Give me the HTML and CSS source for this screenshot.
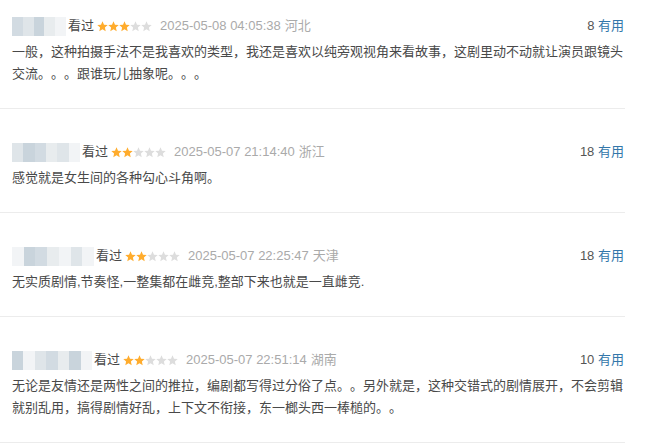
FILE: index.html
```html
<!DOCTYPE html>
<html lang="zh-CN">
<head>
<meta charset="utf-8">
<link rel="stylesheet" href="styles.css">
</head>
<body>
<div class="list">
  <div class="item first">
    <div class="head">
      <div class="left">
        <span class="blur w54"><i class="c1"></i><i class="c2"></i><i class="c3"></i><i class="c4"></i><i class="c5"></i></span>
        <span class="watched">看过</span>
        <svg class="stars" width="55" height="11" viewBox="0 0 55 11">
          <polygon class="on" points="5.5,0.3 7,3.8 10.7,4.1 7.9,6.6 8.7,10.3 5.5,8.3 2.3,10.3 3.1,6.6 0.3,4.1 4,3.8"/>
          <polygon class="on" transform="translate(11,0)" points="5.5,0.3 7,3.8 10.7,4.1 7.9,6.6 8.7,10.3 5.5,8.3 2.3,10.3 3.1,6.6 0.3,4.1 4,3.8"/>
          <polygon class="on" transform="translate(22,0)" points="5.5,0.3 7,3.8 10.7,4.1 7.9,6.6 8.7,10.3 5.5,8.3 2.3,10.3 3.1,6.6 0.3,4.1 4,3.8"/>
          <polygon class="off" transform="translate(33,0)" points="5.5,0.3 7,3.8 10.7,4.1 7.9,6.6 8.7,10.3 5.5,8.3 2.3,10.3 3.1,6.6 0.3,4.1 4,3.8"/>
          <polygon class="off" transform="translate(44,0)" points="5.5,0.3 7,3.8 10.7,4.1 7.9,6.6 8.7,10.3 5.5,8.3 2.3,10.3 3.1,6.6 0.3,4.1 4,3.8"/>
        </svg>
        <span class="time">2025-05-08 04:05:38</span>
        <span class="loc">河北</span>
      </div>
      <div class="vote"><span class="num">8</span> <span class="useful">有用</span></div>
    </div>
    <p class="text">一般，这种拍摄手法不是我喜欢的类型，我还是喜欢以纯旁观视角来看故事，这剧里动不动就让演员跟镜头交流。。。跟谁玩儿抽象呢。。。</p>
  </div>

  <div class="item">
    <div class="head">
      <div class="left">
        <span class="blur w66"><i class="c2"></i><i class="c3"></i><i class="c1"></i><i class="c4"></i><i class="c2"></i><i class="c5"></i></span>
        <span class="watched">看过</span>
        <svg class="stars" width="55" height="11" viewBox="0 0 55 11">
          <polygon class="on" points="5.5,0.3 7,3.8 10.7,4.1 7.9,6.6 8.7,10.3 5.5,8.3 2.3,10.3 3.1,6.6 0.3,4.1 4,3.8"/>
          <polygon class="on" transform="translate(11,0)" points="5.5,0.3 7,3.8 10.7,4.1 7.9,6.6 8.7,10.3 5.5,8.3 2.3,10.3 3.1,6.6 0.3,4.1 4,3.8"/>
          <polygon class="off" transform="translate(22,0)" points="5.5,0.3 7,3.8 10.7,4.1 7.9,6.6 8.7,10.3 5.5,8.3 2.3,10.3 3.1,6.6 0.3,4.1 4,3.8"/>
          <polygon class="off" transform="translate(33,0)" points="5.5,0.3 7,3.8 10.7,4.1 7.9,6.6 8.7,10.3 5.5,8.3 2.3,10.3 3.1,6.6 0.3,4.1 4,3.8"/>
          <polygon class="off" transform="translate(44,0)" points="5.5,0.3 7,3.8 10.7,4.1 7.9,6.6 8.7,10.3 5.5,8.3 2.3,10.3 3.1,6.6 0.3,4.1 4,3.8"/>
        </svg>
        <span class="time">2025-05-07 21:14:40</span>
        <span class="loc">浙江</span>
      </div>
      <div class="vote"><span class="num">18</span> <span class="useful">有用</span></div>
    </div>
    <p class="text">感觉就是女生间的各种勾心斗角啊。</p>
  </div>

  <div class="item">
    <div class="head">
      <div class="left">
        <span class="blur w82"><i class="c5"></i><i class="c3"></i><i class="c1"></i><i class="c4"></i><i class="c5"></i><i class="c2"></i><i class="c5"></i></span>
        <span class="watched">看过</span>
        <svg class="stars" width="55" height="11" viewBox="0 0 55 11">
          <polygon class="on" points="5.5,0.3 7,3.8 10.7,4.1 7.9,6.6 8.7,10.3 5.5,8.3 2.3,10.3 3.1,6.6 0.3,4.1 4,3.8"/>
          <polygon class="on" transform="translate(11,0)" points="5.5,0.3 7,3.8 10.7,4.1 7.9,6.6 8.7,10.3 5.5,8.3 2.3,10.3 3.1,6.6 0.3,4.1 4,3.8"/>
          <polygon class="off" transform="translate(22,0)" points="5.5,0.3 7,3.8 10.7,4.1 7.9,6.6 8.7,10.3 5.5,8.3 2.3,10.3 3.1,6.6 0.3,4.1 4,3.8"/>
          <polygon class="off" transform="translate(33,0)" points="5.5,0.3 7,3.8 10.7,4.1 7.9,6.6 8.7,10.3 5.5,8.3 2.3,10.3 3.1,6.6 0.3,4.1 4,3.8"/>
          <polygon class="off" transform="translate(44,0)" points="5.5,0.3 7,3.8 10.7,4.1 7.9,6.6 8.7,10.3 5.5,8.3 2.3,10.3 3.1,6.6 0.3,4.1 4,3.8"/>
        </svg>
        <span class="time">2025-05-07 22:25:47</span>
        <span class="loc">天津</span>
      </div>
      <div class="vote"><span class="num">18</span> <span class="useful">有用</span></div>
    </div>
    <p class="text">无实质剧情,节奏怪,一整集都在雌竞,整部下来也就是一直雌竞.</p>
  </div>

  <div class="item">
    <div class="head">
      <div class="left">
        <span class="blur w80"><i class="c3"></i><i class="c5"></i><i class="c2"></i><i class="c1"></i><i class="c4"></i><i class="c3"></i><i class="c5"></i></span>
        <span class="watched">看过</span>
        <svg class="stars" width="55" height="11" viewBox="0 0 55 11">
          <polygon class="on" points="5.5,0.3 7,3.8 10.7,4.1 7.9,6.6 8.7,10.3 5.5,8.3 2.3,10.3 3.1,6.6 0.3,4.1 4,3.8"/>
          <polygon class="on" transform="translate(11,0)" points="5.5,0.3 7,3.8 10.7,4.1 7.9,6.6 8.7,10.3 5.5,8.3 2.3,10.3 3.1,6.6 0.3,4.1 4,3.8"/>
          <polygon class="off" transform="translate(22,0)" points="5.5,0.3 7,3.8 10.7,4.1 7.9,6.6 8.7,10.3 5.5,8.3 2.3,10.3 3.1,6.6 0.3,4.1 4,3.8"/>
          <polygon class="off" transform="translate(33,0)" points="5.5,0.3 7,3.8 10.7,4.1 7.9,6.6 8.7,10.3 5.5,8.3 2.3,10.3 3.1,6.6 0.3,4.1 4,3.8"/>
          <polygon class="off" transform="translate(44,0)" points="5.5,0.3 7,3.8 10.7,4.1 7.9,6.6 8.7,10.3 5.5,8.3 2.3,10.3 3.1,6.6 0.3,4.1 4,3.8"/>
        </svg>
        <span class="time">2025-05-07 22:51:14</span>
        <span class="loc">湖南</span>
      </div>
      <div class="vote"><span class="num">10</span> <span class="useful">有用</span></div>
    </div>
    <p class="text">无论是友情还是两性之间的推拉，编剧都写得过分俗了点。。另外就是，这种交错式的剧情展开，不会剪辑就别乱用，搞得剧情好乱，上下文不衔接，东一榔头西一棒槌的。。</p>
  </div>
</div>
</body>
</html>
```

FILE: styles.css
```css
* { box-sizing: border-box; }
html, body {
  margin: 0;
  padding: 0;
  background: #fff;
  overflow: hidden;
}
body {
  font-family: "Liberation Sans", Arial, "Noto Sans CJK SC", sans-serif;
  font-size: 13px;
  color: #494949;
  text-spacing-trim: space-all;
}
.list {
  width: 625px;
}
.item {
  padding: 34px 1px 23px 12px;
  border-bottom: 1px solid #ececec;
}
.item.first {
  padding-top: 17px;
}
.head {
  display: flex;
  justify-content: space-between;
  align-items: center;
  height: 18px;
  line-height: 18px;
}
.left {
  display: flex;
  align-items: center;
}
.blur {
  display: flex;
  height: 19px;
  margin-right: 2px;
  align-items: stretch;
}
.blur i {
  flex: 1;
  display: block;
}
.blur .c1 { background: #d2dbe2; }
.blur .c2 { background: #dfe5e9; }
.blur .c3 { background: #c9d4dc; }
.blur .c4 { background: #e8ecee; }
.blur .c5 { background: #f2f4f6; }
.w54 { width: 54px; }
.w66 { width: 68px; }
.w82 { width: 82px; }
.w80 { width: 80px; }
.watched {
  color: #494949;
  margin-right: 3px;
}
.stars {
  display: block;
  margin-right: 8px;
}
.stars .on { fill: #ffac2d; }
.stars .off { fill: #dddddd; }
.time {
  color: #aaa;
}
.loc {
  color: #aaa;
  margin-left: 4px;
}
.vote .num {
  color: #555;
}
.vote .useful {
  color: #37a;
}
.text {
  margin: 6px 0 0;
  line-height: 22px;
  color: #494949;
  word-break: break-all;
  text-spacing-trim: space-all;
}
```
